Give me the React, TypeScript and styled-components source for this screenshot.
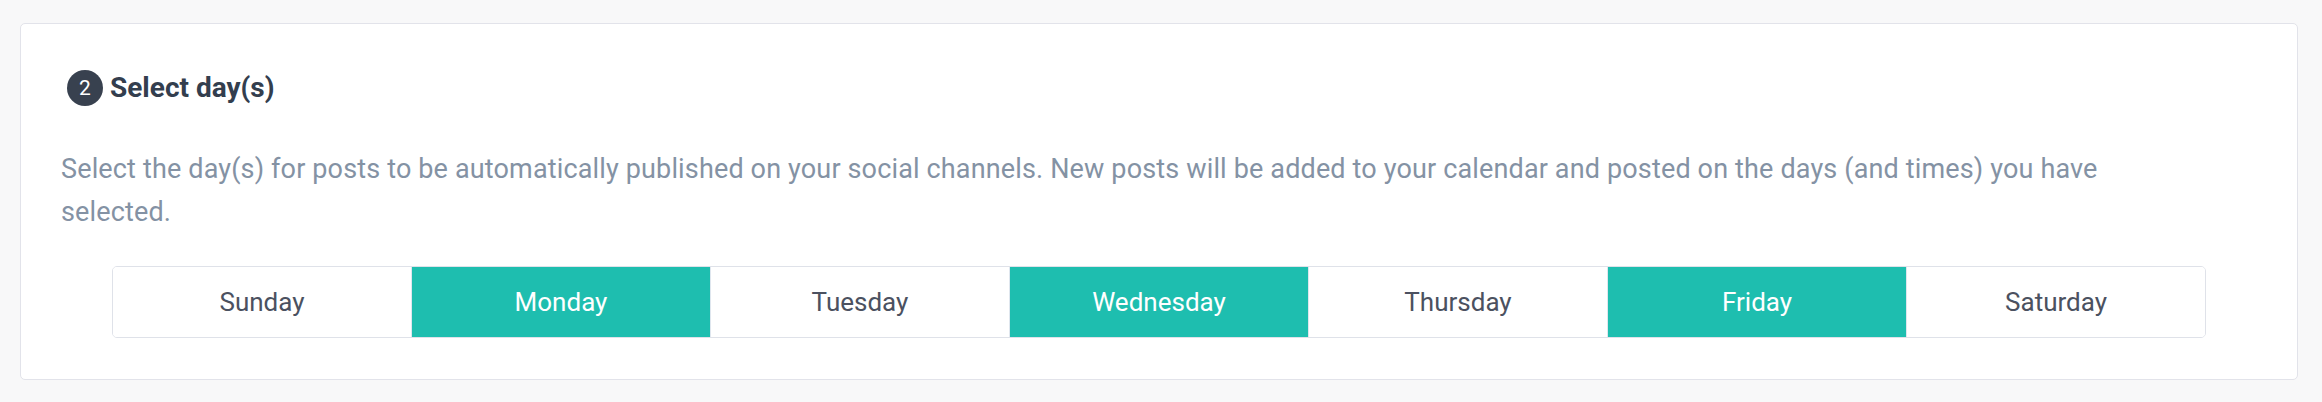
import { useState } from 'react';
import styled, { createGlobalStyle } from 'styled-components';

const GlobalStyle = createGlobalStyle`
  html, body {
    margin: 0;
    padding: 0;
    background: #f8f8f9;
  }
  body {
    font-family: Roboto, "Liberation Sans", Arial, sans-serif;
  }
`;

const Page = styled.div`
  padding: 23px 24px 23px 20px;
`;

const Card = styled.section`
  background: #fff;
  border: 1px solid #e2e3ea;
  border-radius: 5px;
  padding: 46px 40px 41px 40px;
`;

const Heading = styled.h3`
  display: flex;
  align-items: center;
  gap: 7px;
  margin: 0 0 0 6px;
  font-size: 28px;
  font-weight: 700;
  color: #333e4e;
  line-height: 36px;
`;

const StepBadge = styled.span`
  width: 36px;
  height: 36px;
  border-radius: 50%;
  background: #38414f;
  color: #fff;
  font-size: 21px;
  font-weight: 400;
  display: inline-flex;
  align-items: center;
  justify-content: center;
`;

const Description = styled.p`
  margin: 42px 60px 32px 0;
  font-size: 27px;
  letter-spacing: 0.15px;
  line-height: 43px;
  color: #8492a4;
`;

const DayGroup = styled.div`
  display: flex;
  margin: 0 51px;
  border: 1px solid #dfe2e9;
  border-radius: 5px;
  overflow: hidden;
`;

const DayButton = styled.button<{ $active: boolean }>`
  flex: 1;
  height: 70px;
  border: none;
  border-right: 1px solid #dfe6ee;
  background: ${(p) => (p.$active ? '#1ebeaf' : '#fff')};
  color: ${(p) => (p.$active ? '#fff' : '#4b5160')};
  font-family: inherit;
  font-size: 26px;
  cursor: pointer;
  padding: 0;

  &:last-child {
    border-right: none;
  }
`;

const DAYS = ['Sunday', 'Monday', 'Tuesday', 'Wednesday', 'Thursday', 'Friday', 'Saturday'];

export default function App() {
  const [selected, setSelected] = useState<string[]>(['Monday', 'Wednesday', 'Friday']);

  const toggle = (day: string) =>
    setSelected((cur) => (cur.includes(day) ? cur.filter((d) => d !== day) : [...cur, day]));

  return (
    <Page>
      <GlobalStyle />
      <Card>
        <Heading>
          <StepBadge>2</StepBadge>
          Select day(s)
        </Heading>
        <Description>
          Select the day(s) for posts to be automatically published on your social channels. New
          posts will be added to your calendar and posted on the days (and times) you have
          selected.
        </Description>
        <DayGroup>
          {DAYS.map((day) => (
            <DayButton
              key={day}
              type="button"
              $active={selected.includes(day)}
              onClick={() => toggle(day)}
            >
              {day}
            </DayButton>
          ))}
        </DayGroup>
      </Card>
    </Page>
  );
}
